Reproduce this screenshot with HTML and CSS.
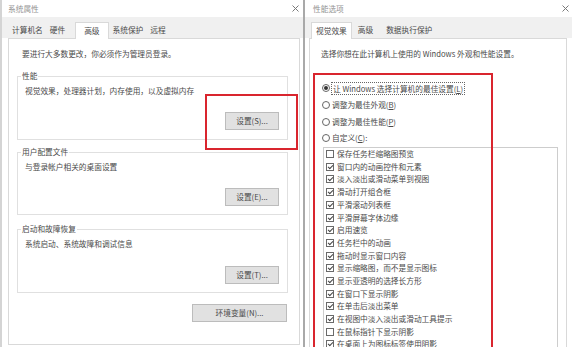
FILE: index.html
```html
<!DOCTYPE html>
<html lang="zh-CN">
<head>
    <meta charset="UTF-8">
    <title>系统属性 - 性能选项</title>
    <link rel="stylesheet" href="styles.css">
</head>
<body>
    <div class="desk">
        <!-- 系统属性 -->
        <section class="win win-sys">
            <header class="titlebar">
                <span class="title">系统属性</span>
                <svg class="close" viewBox="0 0 7 7"><path d="M0.5 0.5L6.5 6.5M6.5 0.5L0.5 6.5"/></svg>
            </header>
            <nav class="tabs">
                <span class="tab">计算机名</span>
                <span class="tab">硬件</span>
                <span class="tab active">高级</span>
                <span class="tab">系统保护</span>
                <span class="tab">远程</span>
            </nav>
            <div class="panel">
                <p class="note">要进行大多数更改，你必须作为管理员登录。</p>

                <div class="group perf">
                    <div class="group-title">性能</div>
                    <p class="group-text">视觉效果，处理器计划，内存使用，以及虚拟内存</p>
                    <button class="btn">设置(S)...</button>
                </div>

                <div class="group profile">
                    <div class="group-title">用户配置文件</div>
                    <p class="group-text">与登录帐户相关的桌面设置</p>
                    <button class="btn">设置(E)...</button>
                </div>

                <div class="group startup">
                    <div class="group-title">启动和故障恢复</div>
                    <p class="group-text">系统启动、系统故障和调试信息</p>
                    <button class="btn">设置(T)...</button>
                </div>

                <button class="btn btn-wide">环境变量(N)...</button>
            </div>
        </section>

        <!-- 性能选项 -->
        <section class="win win-perf">
            <header class="titlebar">
                <span class="title">性能选项</span>
                <svg class="close" viewBox="0 0 7 7"><path d="M0.5 0.5L6.5 6.5M6.5 0.5L0.5 6.5"/></svg>
            </header>
            <nav class="tabs">
                <span class="tab active">视觉效果</span>
                <span class="tab">高级</span>
                <span class="tab">数据执行保护</span>
            </nav>
            <div class="panel">
                <p class="note">选择你想在此计算机上使用的 Windows 外观和性能设置。</p>

                <div class="radios">
                    <div class="radio-row"><span class="radio on"></span><span class="focus">让 Windows 选择计算机的最佳设置(<u>L</u>)</span></div>
                    <div class="radio-row"><span class="radio"></span><span>调整为最佳外观(<u>B</u>)</span></div>
                    <div class="radio-row"><span class="radio"></span><span>调整为最佳性能(<u>P</u>)</span></div>
                    <div class="radio-row"><span class="radio"></span><span>自定义(<u>C</u>):</span></div>
                </div>

                <div class="list">
                    <div class="item"><span class="chk"></span>保存任务栏缩略图预览</div>
                    <div class="item"><span class="chk on"></span>窗口内的动画控件和元素</div>
                    <div class="item"><span class="chk on"></span>淡入淡出或滑动菜单到视图</div>
                    <div class="item"><span class="chk on"></span>滑动打开组合框</div>
                    <div class="item"><span class="chk on"></span>平滑滚动列表框</div>
                    <div class="item"><span class="chk on"></span>平滑屏幕字体边缘</div>
                    <div class="item"><span class="chk on"></span>启用速览</div>
                    <div class="item"><span class="chk on"></span>任务栏中的动画</div>
                    <div class="item"><span class="chk on"></span>拖动时显示窗口内容</div>
                    <div class="item"><span class="chk on"></span>显示缩略图，而不是显示图标</div>
                    <div class="item"><span class="chk on"></span>显示亚透明的选择长方形</div>
                    <div class="item"><span class="chk on"></span>在窗口下显示阴影</div>
                    <div class="item"><span class="chk on"></span>在单击后淡出菜单</div>
                    <div class="item"><span class="chk on"></span>在视图中淡入淡出或滑动工具提示</div>
                    <div class="item"><span class="chk"></span>在鼠标指针下显示阴影</div>
                    <div class="item"><span class="chk on"></span>在桌面上为图标标签使用阴影</div>
                </div>
            </div>
        </section>

        <!-- red highlight marks -->
        <div class="mark mark-settings"></div>
        <div class="mark mark-effects"></div>
    </div>
</body>
</html>
```

FILE: styles.css
```css
* {
    box-sizing: border-box;
}

body {
    margin: 0;
    width: 572px;
    height: 347px;
    overflow: hidden;
    background: #fff;
    font-family: "Noto Sans CJK SC", "Noto Sans", sans-serif;
    font-size: 7.7px;
    line-height: 12px;
    color: #4a4a4a;
}

p {
    margin: 0;
}

.desk {
    display: flex;
    height: 347px;
    position: relative;
}

.win {
    display: flex;
    flex-direction: column;
    height: 100%;
    background: #fff;
}

.win-sys {
    width: 305px;
    flex: none;
    border-left: 2px solid #d4d4d4;
    border-right: 2px solid #a9a9a9;
}

.win-perf {
    flex: 1;
    min-width: 0;
}

/* title bar */
.titlebar {
    height: 17px;
    flex: none;
    display: flex;
    align-items: center;
    justify-content: space-between;
    color: #939393;
}

.win-sys .titlebar {
    padding: 0 4px 0 6px;
}

.win-perf .titlebar {
    padding: 0 3px 0 8px;
}

.close {
    width: 7px;
    height: 7px;
}

.close path {
    stroke: #7a7a7a;
    stroke-width: 1;
    fill: none;
}

/* tabs */
.tabs {
    height: 21px;
    flex: none;
    display: flex;
    align-items: flex-end;
    background: #f0f0f0;
}

.tab {
    height: 16px;
    line-height: 16px;
    padding: 0 3px;
    margin-left: 1px;
    white-space: nowrap;
}

.tab.active {
    height: 17px;
    background: #fff;
    border: 1px solid #d9d9d9;
    border-bottom: none;
    margin-bottom: -1px;
    position: relative;
    z-index: 1;
}

.win-sys .tabs {
    padding-left: 6px;
}

.win-sys .tab.active {
    margin-left: 7px;
    padding: 0 8px;
}

.win-perf .tabs {
    padding-left: 6px;
}

.win-perf .tab.active {
    margin-left: 0;
    padding: 0 4px;
}

.win-perf .tab:nth-child(2) {
    margin-left: 3px;
}

.win-perf .tab:nth-child(3) {
    margin-left: 7px;
}

/* tab panel */
.panel {
    flex: 1;
    display: flex;
    flex-direction: column;
    border: 1px solid #d9d9d9;
    background: #fff;
}

.win-sys .panel {
    margin: 0 3px 2px 6px;
    padding: 9px 11px 0 8px;
}

.win-perf .panel {
    margin: 0 5px 0 4px;
    padding: 9px 8px 0 11px;
}

.win-sys .note {
    margin-left: 5px;
}

/* group boxes */
.group {
    display: flex;
    flex-direction: column;
    border: 1px solid #e0e0e0;
    padding: 0 8px 8px 7px;
}

.group-title {
    align-self: flex-start;
    margin: -7px 0 0 -4px;
    padding: 0 1px;
    background: #fff;
}

.group-text {
    margin-top: 3px;
}

.perf {
    margin-top: 16px;
    height: 64px;
    padding-bottom: 9px;
}

.profile {
    margin-top: 12px;
    height: 63px;
}

.startup {
    margin-top: 14px;
    height: 64px;
}

.btn {
    margin-top: auto;
    align-self: flex-end;
    width: 54px;
    height: 18px;
    padding: 0;
    font: inherit;
    line-height: 16px;
    color: #4a4a4a;
    background: #e1e1e1;
    border: 1px solid #bcbcbc;
}

.btn-wide {
    margin: 11px 1px 0 0;
    width: 95px;
}

/* radios */
.radios {
    margin-top: 20px;
}

.radio-row {
    height: 16.7px;
    display: flex;
    align-items: center;
    gap: 2px;
    padding-left: 1px;
}

.radio {
    width: 8px;
    height: 8px;
    border: 1px solid #666;
    border-radius: 50%;
    display: flex;
    align-items: center;
    justify-content: center;
    flex: none;
}

.radio.on::after {
    content: "";
    width: 4px;
    height: 4px;
    border-radius: 50%;
    background: #333;
}

.focus {
    outline: 1px dotted #666;
    line-height: 11px;
    padding: 0 1px;
}

/* checkbox list */
.list {
    margin-left: 2px;
    flex: 1;
    border: 1px solid #cdcdcd;
    padding-left: 2px;
}

.item {
    height: 12.7px;
    display: flex;
    align-items: center;
    gap: 3px;
    white-space: nowrap;
}

.chk {
    width: 8px;
    height: 8px;
    flex: none;
    border: 1px solid #6a6a6a;
    background: #fff;
    display: flex;
    align-items: center;
    justify-content: center;
}

.chk.on::after {
    content: "";
    width: 4px;
    height: 2px;
    margin-top: -1px;
    border-left: 1px solid #444;
    border-bottom: 1px solid #444;
    transform: rotate(-45deg);
}

/* red annotation boxes */
.mark {
    position: absolute;
    border: 2px solid #d9252e;
    pointer-events: none;
}

.mark-settings {
    left: 205px;
    top: 94px;
    width: 93px;
    height: 56px;
}

.mark-effects {
    left: 313px;
    top: 73px;
    width: 180px;
    height: 290px;
}
```
